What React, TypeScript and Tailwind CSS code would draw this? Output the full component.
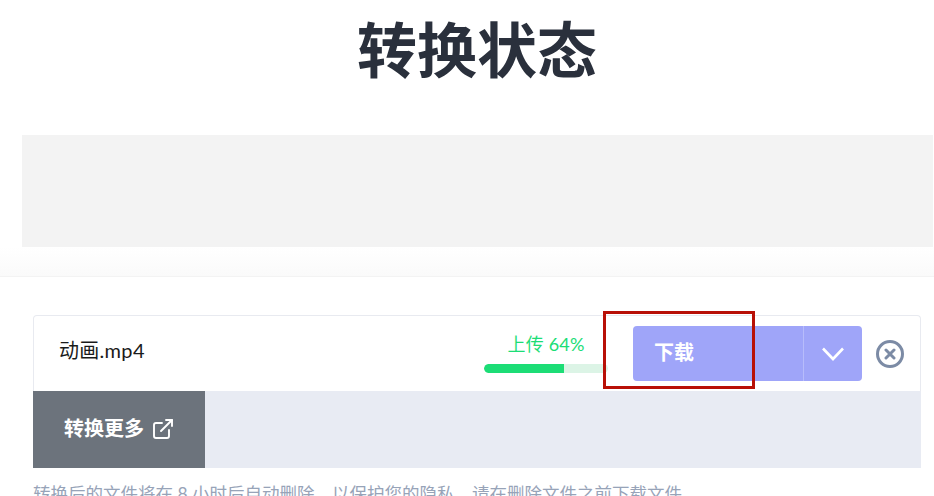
import React from "react";
import { ExternalLink } from "lucide-react";

const cjk = { fontFamily: 'Lato, "Noto Sans CJK SC", sans-serif' };

export default function App() {
  return (
    <div style={cjk} className="h-[496px] w-[934px] overflow-hidden bg-white relative">
      {/* Heading */}
      <h1 className="h-[135px] pt-[14px] pl-[20px] text-center text-[60px] leading-[72px] font-bold text-[#2a303c]">
        转换状态
      </h1>

      {/* Ad slot */}
      <div className="ml-[22px] mr-px h-[112px] bg-[#f3f3f3]" />

      {/* Fade band */}
      <div className="h-[30px] bg-gradient-to-b from-white to-[#fafafa] border-b border-[#f3f3f3]" />

      <main className="px-[33px] pr-[13px] pt-[38px]">
        <div className="border border-[#e8eaf0] border-b-0 rounded-t-[4px] h-[76px] flex items-center pl-[25px] pr-[16px]">
          <span className="text-[20px] tracking-[0.3px] text-[#1a1a1a] flex-1 -mt-[7px]">动画.mp4</span>

          <div className="w-[124px] flex flex-col items-center mr-[25px]">
            <span className="text-[18px] leading-[24px] tracking-[0.2px] text-[#1cdd76] -mt-[3px]">上传 64%</span>
            <div className="w-[124px] h-[9px] mt-[8px] rounded-full bg-[#dcf4e6] overflow-hidden">
              <div className="h-full w-[80px] bg-[#1cdd76] rounded-l-full" />
            </div>
          </div>

          <div className="w-[229px] h-[55px] rounded-[4px] bg-[#9fa5f9] flex items-center text-white">
            <span className="flex-1 pl-[21px] text-[20px] font-bold -mt-[3px]">下载</span>
            <span className="w-[59px] h-full border-l border-[#b7bcfb] flex items-center justify-center">
              <svg width="22" height="14" viewBox="0 0 22 14" fill="none" stroke="currentColor" strokeWidth="2.6">
                <path d="M1 1.5 L11 12 L21 1.5" />
              </svg>
            </span>
          </div>

          <span className="ml-[14px] w-[28px] h-[28px] rounded-full border-[3px] border-[#7c8ba5] flex items-center justify-center">
            <svg width="12" height="12" viewBox="0 0 12 12" fill="none" stroke="#7c8ba5" strokeWidth="3" strokeLinecap="round">
              <path d="M2 2 L10 10 M10 2 L2 10" />
            </svg>
          </span>
        </div>

        <div className="h-[77px] bg-[#e8ebf3] flex">
          <div className="w-[172px] bg-[#6c737c] text-white flex items-center justify-center gap-[7px] pl-[1px]">
            <span className="text-[20px] font-bold -mt-[3px]">转换更多</span>
            <ExternalLink className="w-[24px] h-[24px] -mt-[1px]" strokeWidth={1.9} />
          </div>
        </div>

        <p className="mt-[14px] text-[17.5px] leading-[24px] text-[#97a3b8] whitespace-nowrap">
          转换后的文件将在 8 小时后自动删除，以保护您的隐私。请在删除文件之前下载文件。
        </p>
      </main>

      {/* Annotation box drawn over the screenshot */}
      <div className="absolute left-[603px] top-[311px] w-[152px] h-[78px] border-[3px] border-[#b81007]" />
    </div>
  );
}
